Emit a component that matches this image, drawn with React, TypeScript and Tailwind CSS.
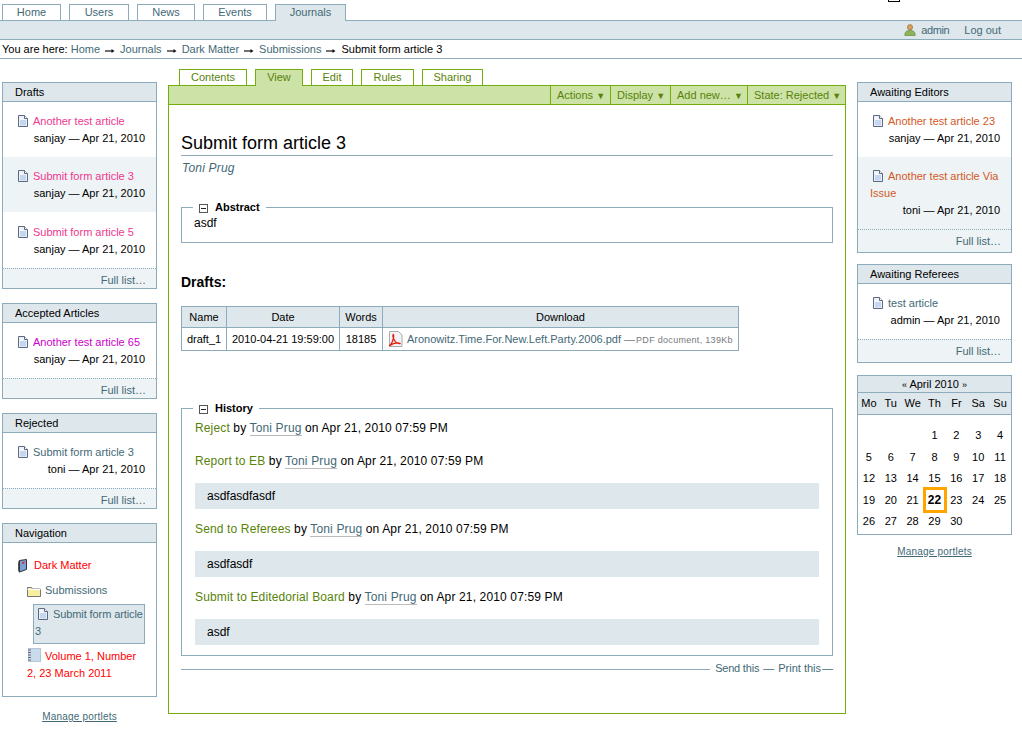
import type { ReactNode } from "react";

const SITE_TABS = ["Home", "Users", "News", "Events"];
const CONTENT_TABS = ["Contents", "View", "Edit", "Rules", "Sharing"];
const MENUS = [
  { label: "Actions", w: "w-[60px]" },
  { label: "Display", w: "w-[60px]" },
  { label: "Add new…", w: "w-[77px]" },
  { label: "State: Rejected", w: "w-[98px]" },
];

function DocIcon({ className = "" }: { className?: string }) {
  return (
    <svg viewBox="0 0 12 12" className={`w-[12px] h-[12px] shrink-0 ${className}`}>
      <path d="M1.500.500h6l3 3v8h-9z" fill="#eef2f8" stroke="#5b6a80" />
      <path d="M7.500.500v3h3" fill="#fff" stroke="#5b6a80" />
      <path d="M3 5h6v5.500H3z" fill="#9dbce6" />
      <path d="M3 4h3M3 6h6M3 8h6M3 10h6" stroke="#fff" strokeWidth="0.8" />
    </svg>
  );
}

function Portlet({ title, children }: { title: string; children: ReactNode }) {
  return (
    <div className="border border-[#8cacbb]">
      <div className="bg-[#dee7ec] border-b border-[#8cacbb] h-[19px] leading-[18px] pl-[12px]">{title}</div>
      {children}
    </div>
  );
}

function Item({ title, color, meta, alt, extra }: { title: string; color: string; meta: string; alt?: boolean; extra?: boolean }) {
  return (
    <div className={`pl-[12px] pr-[4px] pb-[10px] leading-[17px] ${extra ? "pt-[12px]" : "pt-[11px]"} ${alt ? "bg-[#eef3f5]" : ""}`}>
      <div className={color}>
        <DocIcon className="inline-block mr-[4px] ml-[2px] align-[-2px]" />
        {title}
      </div>
      <div className="text-right pr-[7px]">{meta}</div>
    </div>
  );
}

function FullList({ tall }: { tall?: boolean }) {
  return (
    <div
      className={`border-t border-dotted border-[#8cacbb] bg-[#eef3f5] leading-[22px] text-right pr-[10px] text-[#436976] ${
        tall ? "h-[23px]" : "h-[20px]"
      }`}
    >
      Full list…
    </div>
  );
}

function ManagePortlets() {
  return (
    <div className="text-center text-[10px] text-[#436976] underline tracking-[0.2px]">Manage portlets</div>
  );
}

function Minus() {
  return (
    <svg viewBox="0 0 9 9" className="w-[9px] h-[9px] inline-block mr-[7px] ml-[6px]">
      <rect x="0.5" y="0.5" width="8" height="8" fill="#fff" stroke="#555" />
      <path d="M2 4.500h5" stroke="#222" />
    </svg>
  );
}

function Box({ legend, children, className = "" }: { legend: string; children: ReactNode; className?: string }) {
  return (
    <fieldset className={`border border-[#8cacbb] ${className}`}>
      <legend className="ml-[11px] pr-[6px] font-bold text-[11px] leading-[13px]">
        <Minus />
        {legend}
      </legend>
      {children}
    </fieldset>
  );
}

function HistoryLine({ action, note }: { action: string; note?: string }) {
  return (
    <>
      <div className="leading-[17px] tracking-[0.14px]">
        <span className="text-[#578308]">{action}</span> by{" "}
        <span className="text-[#436976] border-b border-[#bbb]">Toni Prug</span> on Apr 21, 2010 07:59 PM
      </div>
      {note && (
        <div className="bg-[#dee7ec] h-[26px] leading-[26px] pl-[12px] mt-[13px] mb-[12px]">{note}</div>
      )}
    </>
  );
}

function Arrow() {
  return (
    <svg viewBox="0 0 10 6" className="w-[10px] h-[6px] mx-[5px] mt-[8px]">
      <path d="M0 3h8" stroke="#111" strokeWidth="1.200" />
      <path d="M6.500 1l3 2-3 2z" fill="#111" />
    </svg>
  );
}

const CAL_ROWS = [
  ["", "", "", "1", "2", "3", "4"],
  ["5", "6", "7", "8", "9", "10", "11"],
  ["12", "13", "14", "15", "16", "17", "18"],
  ["19", "20", "21", "22", "23", "24", "25"],
  ["26", "27", "28", "29", "30", "", ""],
];

export default function App() {
  return (
    <div className="relative w-[1022px] h-[751px] overflow-hidden bg-white text-[11px] text-black font-['Liberation_Sans',Arial,sans-serif]">
      <div className="absolute left-[888px] -top-[2px] w-[12px] h-[4px] border border-black" />

      {/* site tabs */}
      <div className="flex pt-[4px] pl-[2px] gap-[8px] h-[21px] relative z-10">
        {SITE_TABS.map((t, i) => (
          <div
            key={t}
            className={`border border-b-0 border-[#8cacbb] bg-white text-[#436976] text-center h-[16px] leading-[15px] ${
              ["w-[59px]", "w-[60px]", "w-[58px]", "w-[64px]"][i]
            }`}
          >
            {t}
          </div>
        ))}
        <div className="border border-b-0 border-[#8cacbb] bg-[#dee7ec] text-[#436976] text-center w-[71px] h-[17px] leading-[15px]">
          Journals
        </div>
      </div>
      <div className="-mt-px h-[20px] bg-[#dee7ec] border-y border-[#8cacbb] flex items-center justify-end pr-[21px] text-[#436976]">
        <svg viewBox="0 0 12 12" className="w-[12px] h-[12px] mr-[5px]">
          <circle cx="6" cy="3.200" r="2.600" fill="#d9a05b" stroke="#8a6a2c" strokeWidth="0.6" />
          <path d="M.8 11.500c0-4 2-5 5.200-5s5.200 1 5.200 5z" fill="#8fb35a" stroke="#5c7d34" strokeWidth="0.6" />
        </svg>
        <span className="tracking-[-0.4px]">admin</span>
        <span className="ml-[15px]">Log out</span>
      </div>
      <div className="h-[19px] border-b border-[#8cacbb] pl-[2px] leading-[19px] flex">
        <span>You are here:&nbsp;</span>
        <span className="text-[#436976]">Home</span>
        <Arrow />
        <span className="text-[#436976]">Journals</span>
        <Arrow />
        <span className="text-[#436976]">Dark Matter</span>
        <Arrow />
        <span className="text-[#436976]">Submissions</span>
        <Arrow />
        <span>Submit form article 3</span>
      </div>

      <div className="flex pl-[2px]">
        {/* left column */}
        <div className="w-[155px] pt-[23px] flex flex-col gap-[14px] shrink-0">
          <Portlet title="Drafts">
            <Item title="Another test article" color="text-[#f0388f]" meta="sanjay — Apr 21, 2010" />
            <Item title="Submit form article 3" color="text-[#f0388f]" meta="sanjay — Apr 21, 2010" alt />
            <Item title="Submit form article 5" color="text-[#f0388f]" meta="sanjay — Apr 21, 2010" extra />
            <FullList />
          </Portlet>
          <Portlet title="Accepted Articles">
            <Item title="Another test article 65" color="text-[#cc00cc]" meta="sanjay — Apr 21, 2010" />
            <FullList />
          </Portlet>
          <Portlet title="Rejected">
            <Item title="Submit form article 3" color="text-[#436976]" meta="toni — Apr 21, 2010" />
            <FullList />
          </Portlet>
          <Portlet title="Navigation">
            <div className="pl-[14px] pr-[10px] pt-[10px] pb-[14px] leading-[17px]">
              <div className="flex items-center gap-[5px] text-[#ff0000] h-[25px]">
                <svg viewBox="0 0 12 14" className="w-[12px] h-[14px]">
                  <path d="M2.500 1.500l7-1v10l-7 2.500z" fill="#7aa0dc" stroke="#333" />
                  <path d="M2.500 1.500c-1 .500-1 1-1 2v8c0 1 .500 1.500 1 1.500" fill="none" stroke="#555" />
                  <path d="M5 3l2.500-.500v2L5 5z" fill="#d33" />
                </svg>
                Dark Matter
              </div>
              <div className="flex items-center gap-[4px] text-[#436976] pl-[10px] h-[25px]">
                <svg viewBox="0 0 14 12" className="w-[14px] h-[12px]">
                  <path d="M.5 2.500h4l1 1.500h8v7.500H.5z" fill="#f7eea0" stroke="#777" />
                  <path d="M.5 4.500h13" stroke="#fff" />
                </svg>
                Submissions
              </div>
              <div className="ml-[16px] mr-[1px] mt-[1px] border border-[#8cacbb] bg-[#dee7ec] text-[#436976] pl-[1px] pt-[1px] h-[40px] whitespace-nowrap overflow-hidden tracking-[-0.1px]">
                <DocIcon className="inline-block ml-[2px] mr-[4px] align-[-2px]" />
                Submit form article
                <br />3
              </div>
              <div className="text-[#ff0000] ml-[10px] mt-[4px]">
                <svg viewBox="0 0 14 14" className="w-[14px] h-[14px] inline-block mr-[4px] align-[-2px]">
                  <rect x="1.500" y="0.500" width="12" height="13" fill="#c9dcec" stroke="#b4c6d6" />
                  <path d="M1 2h3M1 4.500h3M1 7h3M1 9.500h3M1 12h3" stroke="#667" />
                </svg>
                <span>Volume 1, Number 2, 23 March 2011</span>
              </div>
            </div>
          </Portlet>
          <div className="-mt-[2px]">
            <ManagePortlets />
          </div>
        </div>

        {/* main column */}
        <div className="ml-[11px] w-[678px] shrink-0">
          <div className="flex pt-[10px] pl-[11px] gap-[8px] h-[27px] relative z-10">
            {CONTENT_TABS.map((t, i) => (
              <div
                key={t}
                className={`border border-b-0 border-[#74ae0b] text-[#578308] text-center leading-[15px] ${
                  t === "View" ? "bg-[#cde2a7] h-[17px]" : "bg-white h-[16px]"
                } ${["w-[68px]", "w-[48px]", "w-[42px]", "w-[53px]", "w-[61px]"][i]}`}
              >
                {t}
              </div>
            ))}
          </div>
          <div className="-mt-px border border-[#74ae0b] h-[629px]">
            <div className="h-[19px] bg-[#cde2a7] border-b border-[#74ae0b] flex justify-end text-[#578308]">
              {MENUS.map((m) => (
                <div key={m.label} className={`border-l border-[#74ae0b] pl-[6px] leading-[18px] ${m.w}`}>
                  {m.label} <span className="text-[9px]">▼</span>
                </div>
              ))}
            </div>
            <div className="pl-[12px] pr-[12px]">
              <h1 className="text-[18px] leading-[21px] mt-[28px] pb-[1px] border-b border-[#8cacbb]">
                Submit form article 3
              </h1>
              <div className="italic text-[12px] tracking-[0.2px] text-[#436976] mt-[5px] leading-[14px] pl-[1px]">Toni Prug</div>

              <Box legend="Abstract" className="mt-[26px] h-[42px] text-[12px]">
                <div className="leading-[17px] mt-[1px] pl-[12px]">asdf</div>
              </Box>

              <h3 className="font-bold text-[14px] leading-[17px] mt-[31px]">Drafts:</h3>

              <table className="mt-[15px] w-[558px] border-collapse table-fixed">
                <thead>
                  <tr className="bg-[#dee7ec] h-[21px]">
                    <th className="w-[45px] border border-[#8cacbb] font-normal">Name</th>
                    <th className="w-[113px] border border-[#8cacbb] font-normal">Date</th>
                    <th className="w-[43px] border border-[#8cacbb] font-normal">Words</th>
                    <th className="border border-[#8cacbb] font-normal">Download</th>
                  </tr>
                </thead>
                <tbody>
                  <tr className="h-[23px] text-center">
                    <td className="border border-[#8cacbb]">draft_1</td>
                    <td className="border border-[#8cacbb]">2010-04-21 19:59:00</td>
                    <td className="border border-[#8cacbb]">18185</td>
                    <td className="border border-[#8cacbb] text-left pl-[5px] whitespace-nowrap">
                      <svg viewBox="0 0 15 16" className="w-[15px] h-[16px] inline-block mr-[4px] align-[-4px]">
                        <path d="M1.500.500h9l3.500 3.500v11.500h-12.500z" fill="#f4f2f6" stroke="#aaa" />
                        <path
                          d="M1 15c2-1 3.500-4 4.500-8 .3-1.500.2-3-.2-3.500-.6.500-.3 3 1 5.500 1 2 3 3.800 6.200 3.500-2.500-1-6.500-.8-11.500 2.500z"
                          fill="none"
                          stroke="#e0230f"
                          strokeWidth="1.300"
                        />
                      </svg>
                      <span className="text-[#436976]">Aronowitz.Time.For.New.Left.Party.2006.pdf</span>{" "}
                      <span className="text-[#76797c]">
                        —<span className="text-[9px] tracking-[0.3px] ml-[1px]">PDF document, 139Kb</span>
                      </span>
                    </td>
                  </tr>
                </tbody>
              </table>

              <Box legend="History" className="mt-[51px] h-[254px] text-[12px]">
                <div className="pl-[13px] pr-[13px] pt-[5px]">
                  <div className="mb-[16px]">
                    <HistoryLine action="Reject" />
                  </div>
                  <HistoryLine action="Report to EB" note="asdfasdfasdf" />
                  <HistoryLine action="Send to Referees" note="asdfasdf" />
                  <HistoryLine action="Submit to Editedorial Board" note="asdf" />
                </div>
              </Box>

              <div className="flex items-center mt-[4px] text-[#436976]">
                <div className="flex-1 border-t border-[#8cacbb] mt-[2px]" />
                <span className="ml-[5px] tracking-[-0.2px]">Send this</span>
                <span className="mx-[4px]">—</span>
                <span>Print this</span>
                <span className="ml-[1px]">—</span>
              </div>
            </div>
          </div>
        </div>

        {/* right column */}
        <div className="ml-[11px] w-[155px] pt-[23px] flex flex-col gap-[11px] shrink-0">
          <Portlet title="Awaiting Editors">
            <Item title="Another test article 23" color="text-[#d2591f]" meta="sanjay — Apr 21, 2010" />
            <Item title="Another test article Via Issue" color="text-[#d2591f]" meta="toni — Apr 21, 2010" alt />
            <FullList tall />
          </Portlet>
          <Portlet title="Awaiting Referees">
            <Item title="test article" color="text-[#436976]" meta="admin — Apr 21, 2010" />
            <FullList tall />
          </Portlet>
          <div className="border border-[#8cacbb] mt-[1px]">
            <div className="bg-[#dee7ec] border-b border-[#8cacbb] h-[17px] leading-[16px] text-center">
              <span className="text-[9px]">«</span> April 2010 <span className="text-[9px]">»</span>
            </div>
            <div className="bg-[#dee7ec] border-b border-[#8cacbb] h-[22px] leading-[21px] grid grid-cols-7 text-center">
              {["Mo", "Tu", "We", "Th", "Fr", "Sa", "Su"].map((d) => (
                <div key={d}>{d}</div>
              ))}
            </div>
            <div className="pt-[10px] pb-[1px]">
              {CAL_ROWS.map((row, r) => (
                <div key={r} className="grid grid-cols-7 text-center h-[21.5px] leading-[21.5px]">
                  {row.map((d, i) =>
                    d === "22" ? (
                      <div key={i} className="relative font-bold text-[12px]">
                        <div className="absolute -left-[1px] -right-[2px] -top-[3px] -bottom-[2px] border-[3px] border-[#ffa500]" />
                        22
                      </div>
                    ) : (
                      <div key={i}>{d}</div>
                    ),
                  )}
                </div>
              ))}
            </div>
          </div>
          <div className="-mt-[2px]">
            <ManagePortlets />
          </div>
        </div>
      </div>
    </div>
  );
}
